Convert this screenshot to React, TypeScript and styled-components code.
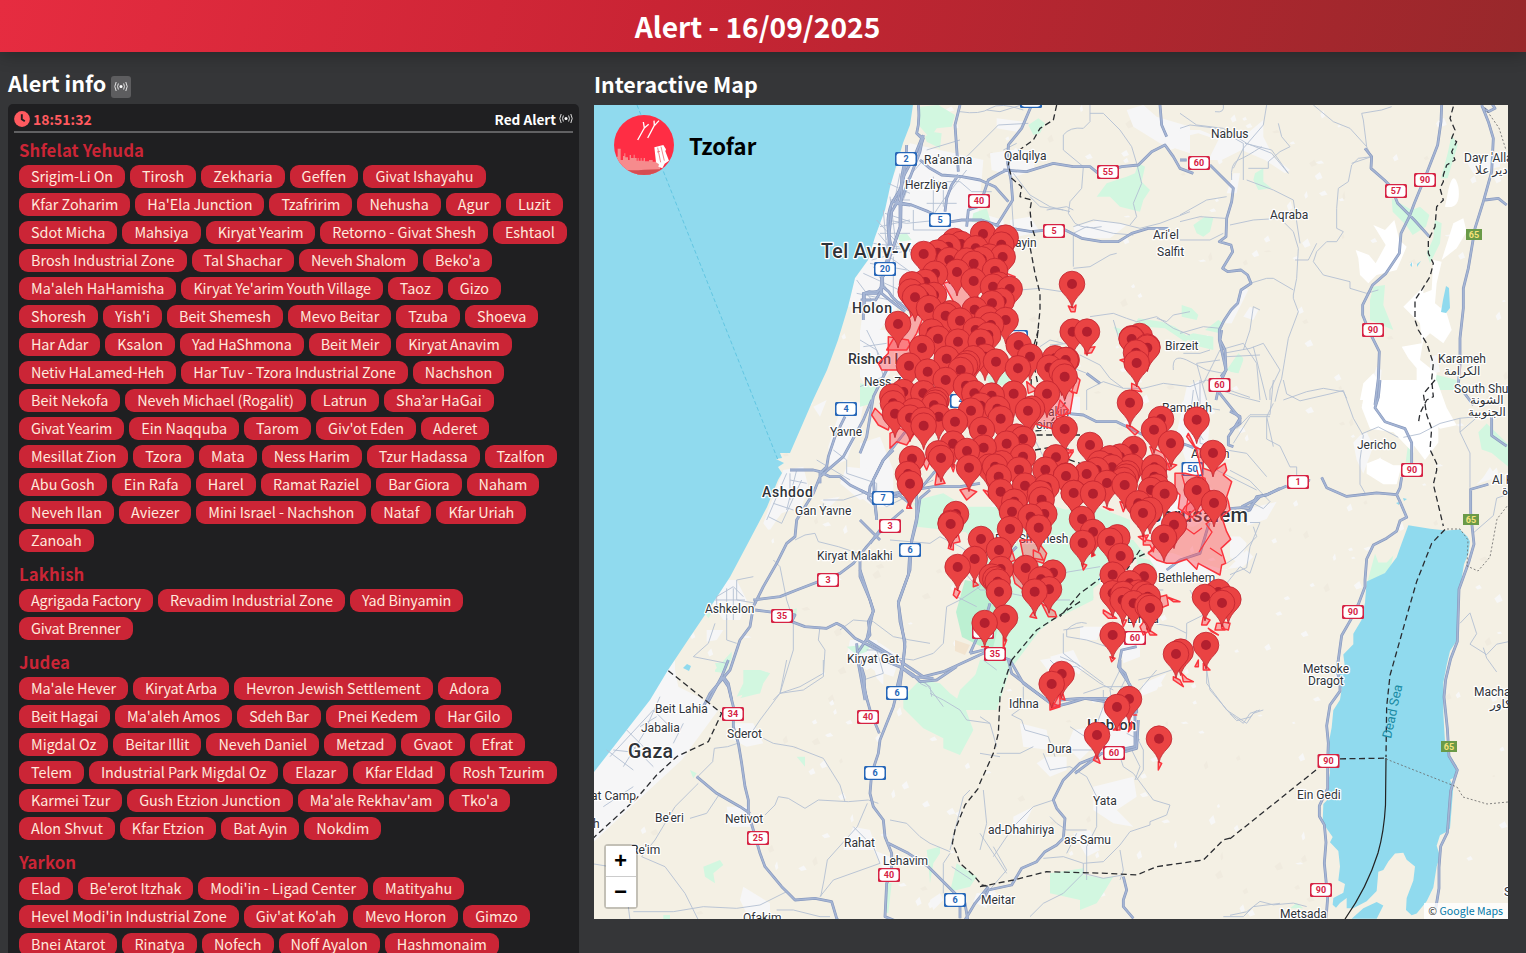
import React from "react";
import styled, { createGlobalStyle } from "styled-components";

const Global = createGlobalStyle`
  * { box-sizing: border-box; }
  body {
    margin: 0;
    height: 953px;
    overflow: hidden;
    background: #353638;
    color: #fff;
    font-family: "Noto Sans CJK JP", "Noto Sans", sans-serif;
  }
`;

const Page = styled.div`
  height: 953px;
  overflow: hidden;
  display: flex;
  flex-direction: column;
`;
const Header = styled.header`
  flex: none;
  height: 52px;
  padding-right: 11px;
  display: flex;
  align-items: center;
  justify-content: center;
  background: linear-gradient(105deg, #e62c40 0%, #c92434 43%, #98282b 100%);
  box-shadow: 0 2px 18px rgba(0, 0, 0, 0.3);
`;
const Title = styled.h1`
  margin: 0;
  font-size: 28.2px;
  line-height: 50px;
  font-weight: 700;
`;
const Main = styled.main`
  flex: 1;
  display: flex;
  gap: 15px;
  padding: 0 18px 0 8px;
  min-height: 0;
`;
const InfoColumn = styled.section`
  width: 571px;
  flex: none;
  display: flex;
  flex-direction: column;
`;
const MapColumn = styled.section`
  width: 914px;
  flex: none;
`;
const Heading = styled.h2<{ $size: number; $height: number; $top: number }>`
  margin: 0;
  height: ${(p) => p.$height}px;
  padding-top: ${(p) => p.$top}px;
  display: flex;
  align-items: flex-start;
  gap: 5px;
  font-size: ${(p) => p.$size}px;
  line-height: 32px;
  font-weight: 700;
`;
const SignalBox = styled.span`
  display: flex;
  align-items: center;
  justify-content: center;
  width: 20px;
  height: 22px;
  margin-top: 9px;
  border-radius: 3px;
  background: #5d5d5f;
`;
const Card = styled.div`
  flex: 1;
  min-height: 0;
  padding: 0 6px;
  border-radius: 5px 5px 0 0;
  background: #1f1f21;
  overflow: hidden;
`;
const CardTop = styled.div`
  display: flex;
  justify-content: space-between;
  height: 29px;
  padding-top: 3px;
  border-bottom: 2px solid #616163;
  font-weight: 700;
  line-height: 22px;
`;
const Time = styled.span`
  display: flex;
  align-items: center;
  gap: 3px;
  font-size: 14px;
  color: #ff5a5f;
`;
const Kind = styled.span`
  display: flex;
  align-items: center;
  gap: 3px;
  font-size: 13.6px;
`;
const Region = styled.section`
  padding: 0 0 0 5px;
`;
const RegionName = styled.h3`
  margin: 0;
  height: 32px;
  padding-top: 5.5px;
  font-size: 16.8px;
  line-height: 22px;
  font-weight: 700;
  letter-spacing: 0.12px;
  color: #cb2536;
`;
const Pills = styled.div`
  display: flex;
  flex-wrap: wrap;
  gap: 5px;
  margin-bottom: 5px;
`;
const Pill = styled.span<{ $tracking: number }>`
  height: 23px;
  padding: 0 12px;
  border-radius: 9px;
  background: #cb2536;
  color: #ffe9dc;
  font-size: 14.4px;
  line-height: 22px;
  letter-spacing: ${(p) => p.$tracking}px;
  white-space: nowrap;
`;
const MapFrame = styled.div`
  position: relative;
  width: 914px;
  height: 814px;
  overflow: hidden;
  background: #f4f0e4;
`;
const Brand = styled.div`
  position: absolute;
  left: 20px;
  top: 10px;
  display: flex;
  gap: 15px;
  color: #000;
  font-size: 22.1px;
  font-weight: 700;
  line-height: 60px;
`;
const Zoom = styled.div`
  position: absolute;
  left: 10px;
  top: 739px;
  width: 34px;
  border: 2px solid rgba(0, 0, 0, 0.2);
  border-radius: 4px;
  background-clip: padding-box;
`;
const ZoomButton = styled.button`
  display: block;
  width: 30px;
  height: 30px;
  padding: 4px 1px 0 0;
  border: 0;
  background: #fff;
  color: #000;
  font: bold 22px/26px "Liberation Mono", monospace;
  & + & { height: 31px; border-top: 1px solid #ccc; }
`;
const Credit = styled.div`
  position: absolute;
  right: 0;
  bottom: 0;
  width: 84px;
  height: 16px;
  padding-right: 5px;
  text-align: right;
  background: rgba(255, 255, 255, 0.8);
  color: #333;
  font-size: 10.6px;
  line-height: 15px;
  white-space: nowrap;
  a { color: #0078a8; }
`;

const regions: [string, string[]][] = [
  ["Shfelat Yehuda", "Srigim-Li On|Tirosh|Zekharia|Geffen|Givat Ishayahu|Kfar Zoharim|Ha'Ela Junction|Tzafririm|Nehusha|Agur|Luzit|Sdot Micha|Mahsiya|Kiryat Yearim|Retorno - Givat Shesh|Eshtaol|Brosh Industrial Zone|Tal Shachar|Neveh Shalom|Beko'a|Ma'aleh HaHamisha|Kiryat Ye'arim Youth Village|Taoz|Gizo|Shoresh|Yish'i|Beit Shemesh|Mevo Beitar|Tzuba|Shoeva|Har Adar|Ksalon|Yad HaShmona|Beit Meir|Kiryat Anavim|Netiv HaLamed-Heh|Har Tuv - Tzora Industrial Zone|Nachshon|Beit Nekofa|Neveh Michael (Rogalit)|Latrun|Sha’ar HaGai|Givat Yearim|Ein Naqquba|Tarom|Giv'ot Eden|Aderet|Mesillat Zion|Tzora|Mata|Ness Harim|Tzur Hadassa|Tzalfon|Abu Gosh|Ein Rafa|Harel|Ramat Raziel|Bar Giora|Naham|Neveh Ilan|Aviezer|Mini Israel - Nachshon|Nataf|Kfar Uriah|Zanoah".split("|")],
  ["Lakhish", "Agrigada Factory|Revadim Industrial Zone|Yad Binyamin|Givat Brenner".split("|")],
  ["Judea", "Ma'ale Hever|Kiryat Arba|Hevron Jewish Settlement|Adora|Beit Hagai|Ma'aleh Amos|Sdeh Bar|Pnei Kedem|Har Gilo|Migdal Oz|Beitar Illit|Neveh Daniel|Metzad|Gvaot|Efrat|Telem|Industrial Park Migdal Oz|Elazar|Kfar Eldad|Rosh Tzurim|Karmei Tzur|Gush Etzion Junction|Ma'ale Rekhav'am|Tko'a|Alon Shvut|Kfar Etzion|Bat Ayin|Nokdim".split("|")],
  ["Yarkon", "Elad|Be'erot Itzhak|Modi'in - Ligad Center|Matityahu|Hevel Modi'in Industrial Zone|Giv'at Ko'ah|Mevo Horon|Gimzo|Bnei Atarot|Rinatya|Nofech|Noff Ayalon|Hashmonaim".split("|")],
];

/* Total pixels by which a name is tightened (positive) or loosened (negative). */
const tighten: Record<string, number> = {
  "Srigim-Li On": 1, Zekharia: -0.7, Geffen: -1, "Ha'Ela Junction": 0.7, Mahsiya: 0.3, "Kiryat Yearim": 3, "Tal Shachar": -0.5, "Neveh Shalom": 2.5,
  "Ma'aleh HaHamisha": 0.5, "Kiryat Ye'arim Youth Village": 5, "Har Adar": 1.5, "Yad HaShmona": 2, "Beit Meir": 0.7, "Kiryat Anavim": 2,
  "Netiv HaLamed-Heh": 2, "Har Tuv - Tzora Industrial Zone": 1, "Neveh Michael (Rogalit)": 1.2, "Givat Yearim": 2, "Ein Naqquba": 0.5,
  Tzora: -0.7, "Ness Harim": 0.5, Mata: -1, "Tzur Hadassa": 0, "Ein Rafa": -1, "Ramat Raziel": 0.7, "Bar Giora": 1, "Mini Israel - Nachshon": 1, "Kfar Uriah": 1.5,
  "Agrigada Factory": 2.8, "Yad Binyamin": 1, "Givat Brenner": 2, "Ma'ale Hever": 1.8, "Kiryat Arba": 2, "Hevron Jewish Settlement": 2,
  "Beit Hagai": 1.5, "Ma'aleh Amos": 0.3, "Sdeh Bar": 1, "Har Gilo": 1, "Beitar Illit": 1, "Industrial Park Migdal Oz": 0.7, "Kfar Eldad": 0.7, "Karmei Tzur": 0.7,
  "Ma'ale Rekhav'am": -0.7, "Alon Shvut": 0.7, "Kfar Etzion": 0, "Bat Ayin": 0.8, "Be'erot Itzhak": 1, "Modi'in - Ligad Center": 0.3,
};

const Signal = () => (
  <svg width="14" height="12" viewBox="0 0 14 12" fill="none" stroke="#f4f4f4" strokeWidth=".9">
    <circle cx="7" cy="5.5" r="1.5" fill="#fff" stroke="none" />
    <path d="M4.4 2.5Q2.7 5.5 4.4 8.5M2.2 1Q-.6 5.5 2.2 10M9.6 2.5Q11.3 5.5 9.6 8.5M11.8 1Q14.6 5.5 11.8 10" />
  </svg>
);
const Clock = () => (
  <svg width="16" height="18" viewBox="0 0 16 18">
    <circle cx="8" cy="9" r="7.9" fill="#ff5a5f" />
    <path d="M7.8 4.3v5l3 2" fill="none" stroke="#1f1f21" strokeWidth="1.9" />
  </svg>
);
const Logo = () => (
  <svg width="60" height="60" viewBox="0 0 180 180">
    <defs><clipPath id="disc"><circle cx="90" cy="90" r="90" /></clipPath></defs>
    <g clipPath="url(#disc)">
      <path fill="#ff2d44" d="M0 0h180v180H0z" />
      <path fill="#f68b8d" d="M0 135h8v-10h3v-24h9v34h7v-12h4v-8h3v12h8v8h5v-15h4v9h8v-10h3v10h6v8h3v-8h3v8h6v-8h3v8h6v-8h4v10h12v-4h11v5h12v-6h10v50H0z" />
      <path fill="#d64d52" d="M0 161q45 8 90 3l90-3v22H0z" />
      <path fill="#fff" d="M121 97l27-7 8 13-2 6 11 28-13 9-7 14-12-5 2-7-9-6Z" />
      <path stroke="#f0707a" strokeWidth="2.5" d="M131 98l9 44m1-47l10 42m-22-26l9-2" />
      <path fill="none" stroke="#fff" strokeWidth="4" d="M71 75l20-36-3-18m3 18l13-11M101 69l20-38-1-14m2 14l13-14" />
    </g>
  </svg>
);

/* Survey sheets: each holds its own origin; one unit is a third of a map pixel
   unless the sheet states another vertical scale. */
type Sheet = {
  at: [number, number];
  sy?: number;
  city?: string[];
  park?: string[];
  sand?: string[];
  minor?: string[];
  major?: string[];
  border?: string[];
  zones?: string[];
  pins?: number[][];
};
const sheets: Sheet[] = [
  {
    at: [590, 60],
    city: ["M960 250L930 300 900 370 890 450 862 530 835 600 795 655 775 740 1040 740 1150 650 1180 300Z"],
    minor: ["M895 370l65 30M885 460l75 25M850 550l110 15M870 570l90 65M820 640l130 60M800 700l150 30M860 480l90 100M930 340l-40 200M800 660l60 80", "M870 500l90-20M845 600l110-30M900 410l20 160M865 520l50 60"],
    major: ["M950 255Q948 330 935 380L905 430Q890 470 895 510T905 560L890 610M945 300L935 350 932 500 910 560M915 430L960 435M878 650v30l18 15q15 30 70 60M878 680q-10 20-40 15l-15 5v50"],
  },
  {
    at: [860, 100],
    city: ["M170 150L290 160 300 220 350 250 330 330 430 360 440 420 250 440 130 600 20 740 0 700 30 450 80 300Z", "M390 160l65-10 60 0 10 60-60 20-70-20ZM410 55l80 10-20 30-60-10ZM800 30l50-15 40 35 100 30v80l-90-30-80-50Z", "M450 360l60-10 30 45-90 20ZM640 380l80-20 80 15-50 40-100 0ZM190 330l70-20 40 50-80 30Z"],
    park: ["M180 20l55-5 50 30-10 35-45 5-20 30-30-35ZM195 110l20-15 30 5-5 45-40-20ZM505 75l30-20 20 15-15 30-20 5ZM710 290l30-40 60-20 25-10 10-30 20 10-10 45 25 25-20 30-10 35-60-15-30-30ZM340 340l40-15 15 50-60-10ZM760 680l20 35 30-25 25-35 70 10 40 15 45 35-15 10-60-40-60-5-30 20ZM110 405l30-5 15 20-35 5Z"],
    minor: ["M300 35q60 10 90-10t100 5M380 30L420 35 500 10M310 180L415 75l90-5M610 105q20-25 60-20l20-20V15M610 105v45l60 50-5 65-35 40-5 35 20 30q30 20 80 10M690 40l40 0 50 50 35 50 15 50 15 60-25 60 10 40-20 25M640 380l60-20 80 10 60 15 60-15 90-35M640 500l0-100 40-20 80 20 60 5M640 505l50-5 60-35 20-5", "M460 220l50 65 60 35 60 15M510 290l30 30 70 10M455 300l5 80M430 150l40-20M320 210l-70 90-40 60M200 150l100-30M480 570l60-5 100 15M690 650l70-10 40 15 30 10 60-15 50 35 50 20M680 700l-50 30-60 5", "M760 660l15 50 40 45M990 635l-50 10-20 20-30-10M560 330l60-10 20 10", "M130 300l20-55h150l35 30h60M130 250l60-70 110-10M160 330v60h120M200 310h90M220 230v140M250 250v70M170 430h150M80 360l60 10 100-10M60 400l90 0M50 440l110 10M30 490l110 20M40 500l60 100M70 330l10 120M90 300l60 0M100 470v120M140 440l40 60"],
    major: ["M175 15q5 50-5 85l15 15-20 50-35 65-20 80-15 25-8 70 0 60-20 50-5 60-15 25-45 0M190 105l-10 50-60 155 0 70-20 60-30 90M170 100l20 15-15 45M180 180l30 25 35 20 60 5 55 10 45 20 40 45M300 15l-15 60 10 140M295 225l-20 30-15 40-5 40M515 15l-30 70-40 50-2 55 10 50 5 60-50 80M440 210l-20 10-35 20-20 60-10 20-30 10-5 50M100 305l55 10 50 20 70 30 30-5 60 0 60 20 90 15 90-10 60 30 60 10 50 0 40-25 50-15 60 0", "M430 210l70 5 80-25 60 10 50 0 25 20 70-20 50-5 40-40 40-20 25 35 20 35 40 15M900 15l5 60 15 35M65 530l0 50 30 25 40 30M65 560l-15 20-40 0v80"],
    border: ["M590 15l-10 45-40 25-20 35-70 50-5 25 10 40 30 25-5 30 35 10-5 30 5 50 10 30-15 30 15 80 15 60 0 50-5 50-5 50-15 80-2 50"],
    zones: ["M250 550l70-20 50 90-70 20ZM440 520l25 10-25 20ZM110 700l50-60 30 10-20 50-30 50H80ZM625 618l15 5 8-8-3 20-12 0ZM675 745l30-5-10 18-20 3Z"],
    pins: [[369,402],[437,413],[284,423],[303,432],[424,434],[265,440],[347,445],[191,462],[232,458],[428,471],[268,480],[388,470],[365,478],[320,482],[341,491],[405,513],[291,516],[225,521],[341,543],[196,546],[156,553],[399,560],[449,567],[416,554],[152,575],[193,589],[165,592],[222,585],[396,610],[425,603],[207,624],[344,629],[270,640],[257,647],[381,655],[300,662],[437,660],[393,675],[114,672],[215,695],[347,690],[385,705],[636,552],[638,695],[681,695],[839,708],[815,717],[862,740]],
  },
  {
    at: [1180, 100],
    city: ["M0 90l60 0 50 20 80 0 60-50 0 50 30 60 50 40-15 10-60-40-70-30-60 30-40 0 30-60-60-20-65 15ZM140 280l20-60 20 0-10 60ZM190 560l15 10-30 60-20 40-20 0ZM190 650l20-30 25 10-15 30ZM580 830l10-30 15 10-5 50ZM750 770l20-5 10 50-30 10ZM850 850l20 5 10 30-20-5ZM850 170l110 0 0 30-80 20Z"],
    sand: ["M580 375l35 15 28-30 15 60 22 20-30 70-60 15-25 25-25-25-5-50-8-25 40 15 20 25 30-55ZM805 270q15-65 30-10 10 70-40 60ZM820 370l30-15 10 40-30 50-45 35ZM760 480l25 5-15 65-5 60 35 30 15 50-25 40-40-30-20 20-10 60 50 40-10 80-50-5 0-90-25-30-20-35 60-10-5-60-50-50 60-60 0 20 25-10ZM550 850l30-30 30 40-10 40-60 0Z"],
    park: ["M40 375l35-25 25 5-10 40-20 15-20-10ZM225 220l25-15 0 40 25 20-40 5-15-30ZM635 295l60 35 25-10 28 25-10 35-40 25-20-30-40-40ZM815 105l18 30-30 100-20 0 20-75ZM765 360l20 10-5 60-30 60-10-30 20-45ZM580 560l35-5-5 60 30 75-70-30 0-60ZM150 815l30-50 10 15-15 40ZM5 615l30 10 20 20-5 15-45-10ZM75 690l40-30 15 10-10 30ZM750 820l80 20 0 30-50 0Z"],
    minor: ["M0 40l50 35 80 10 70 45 75 30 50 60M260 15l-10 60-60 70-30 60M130 15q5 25-25 20M0 85l30-10 80 10 80 45v110M195 130l80 20 50 70M295 70l10 40 25 30-30 15-35 30 0 20-60 0M155 240q-5-50 20-60t70-40M0 365l60-15 75 5M150 375l70-15 80-5 40 40 15 50-5 90-10 50 0 10 15 40-30 80-10 60-10 60-10 30-10 40M140 290l-60 10-80 45M200 240l80 30 60 30 20 130M0 420l90 0 40-20M210 550l50-15 20 0 60 35", "M400 15l60 50 50 20 50 55 15 30-40 5-20 20-10 50-30 20-5 60 0 60 20 10-20 30-30 0-30 30-10 30 30 40 80 20 0 20 50 15 35-10M410 430l-25 50-40 0M575 170l-60 20M560 140l-10-80-5-20 60-10 30-10M190 750l20-60 10-70 20 10M130 760l80-15 40-15 50 80-30 60 0 30M0 700l70-20 50 5M140 770l100-5M10 760l50 0 30-10M120 780l-70 10 30 110M220 740l40 160M310 900l70-25 50-10 60 10 10 20"],
    major: ["M0 180l20 0M90 195l30 30 40 40-5 40-15 50-2 55-20 15 35 10 5 20-15 25-15 25 15 10 40-5 20 15 10 25-30 20-10 40-20 20-20 30-15 30 0 30 20 90-20 45-10 45M555 145l20 25-2 35 40 35 20 20 20 50 50 50 45 50M785 15l-2 50-10 70-35 90-35 85-15 40-25 50-5 60-40 60-40 35-30 60 0 30 20 50 30 60-3 80-10 80M905 15l20 50 15 50-5 100-25 90-25 80-20 120-15 60 0 60-10 90 0 80-5 60 15 20 30 40M915 300l40-5 25 20M905 20l20 15 20-10-10-15"],
    border: ["M820 20l-10 35 15 35-10 25 15 10-15 30 10 25-25 15-10 30 0 20-10 20 10 35-20 20-5 60-20 40 0 40 15 30-10 40-25 40-20 30 0 60 10 30 25 40 10 30 10 30-5 50 5 50-20 10-20 40-5 30"],
  },
  {
    at: [1060, 330],
    city: ["M380 170l40-20 30 110-10 130-60 10-30-90ZM330 500l120-30 50 60-100 60-110-10Z"],
    park: ["M500 120l35-50 15 15-15 45ZM370 20l30-10 60 10 0 40-40-10ZM0 540l110-10 100 40 0 60-230 0Z"],
    minor: ["M60 75l60 30 30 40 40 30 60 0 60-15 80 10 50-20 70 30M80 240v-60l50-25 60 20M340 120q-5-50 40-30l60 30 50 10M480 180l60 20 60 15M430 160l50-100 70-20 40 60 10 110M400 180l-10 90 40 60M420 150l0 190 80 20M440 390l30 30 60 30 60 30M640 220l-20 40 20 90M500 360l60 10 60 70M350 360q30-30 80 0M30 110l50 20M520 340l50-80 60 0M400 150l20 80 60 10"],
    major: ["M20 250l50 5 40 20 60 0 40 20 60 30M300 320l80 25 50 20M485 0l-5 30 15 30 3 60-15 20M475 185l40 50 25 30-15 25-20 30 0 25 15 5M660 475l-40 20-30 5-20 40-60 10-40 0M80 130l40 30"],
    border: ["M20 160l-5 60-60 80-120 10M210 380l-130 10-40 50M0 380l60 20 20 30"],
    zones: ["M345 430l30 0 60 15 10 60-60 50-30-20 5-40-15-15Z", "M0 210l25 30-15 20-20-10ZM0 380l40-15-20 30-20-5ZM200 285l15 5 20 15-10 10-25-25ZM215 160l20 10 10 15-30-5ZM180 90l20-5 10 20ZM50 140l10 10-10 40-15-5ZM325 400l25 5-20 15ZM270 350l40 20 20 50-40-10ZM180 515l20 5-10 25Z"],
    pins: [[215,25],[262,53],[228,68],[230,99],[20,90],[210,218],[303,267],[282,299],[410,269],[333,340],[459,369],[90,345],[221,357],[180,380],[150,385],[120,400],[156,412],[215,410],[110,420],[80,432],[18,438],[202,430],[198,440],[190,450],[283,412],[283,440],[141,459],[194,465],[273,480],[290,470],[314,491],[42,489],[99,491],[235,520],[410,480],[462,519],[249,549],[270,540]],
  },
  {
    at: [860, 330],
    city: ["M0 0l80 0 10 130-60 60-30-50ZM0 340l60-20 40 100 0 110-60 0-40-30ZM570 200l90 0 0 60-90 0Z"],
    park: ["M0 160l50 10-10 50-40 10ZM170 510l80-20 100 60 0 60-180-20ZM380 140l70-20 20 40-80 10Z"],
    minor: ["M0 30l50 30 20 80-70 30M20 0l40 80M0 90l70 0M10 50l70-10M0 480l80 50 60-30M540 50l30-20 40 10M520 320l30 60 60 30M180 470l40-20"],
    major: ["M80 120l-40 80-20 120-20 50M140 300l-70 90-30 60 10 120M0 480l60 30 50-20 40 30M280 370l-60 60-50 60 0 80M100 490l120-20 80 0 60-10"],
    border: ["M535 0l-20 70 20 100M530 315l130 0M525 360l60-10 50 10M530 180l70-10"],
    zones: ["M85 20l60 10 20 60-40 30-60 0-10-20 30-30ZM45 235l-10 20 20 30 30 15 5-20-30-30ZM90 310l30-15 40 20-20 30-30-10-20 20ZM200 380l-10 20 10 20 10-25ZM230 430l15 10 10 20-30 5ZM300 480l20-5 30 10-30 25ZM145 520l10 15-15 0ZM500 155l30 25-25 10ZM600 160l40 30-10 60-40 10 0 40-70-20 30-100ZM640 360l-20 10-10-10ZM270 400l15 5-5 20ZM370 480l30 10-10 15Z"],
    pins: [[476,45],[510,80],[474,115],[408,95],[375,80],[260,86],[186,54],[234,26],[294,35],[362,35],[147,107],[203,125],[340,85],[322,100],[315,108],[302,120],[257,150],[318,167],[585,85],[617,90],[568,113],[614,140],[605,125],[130,186],[190,190],[97,200],[99,220],[105,251],[461,191],[561,191],[395,197],[343,190],[230,210],[226,218],[222,226],[362,227],[333,242],[412,236],[160,243],[150,263],[190,270],[191,287],[236,260],[285,275],[422,266],[516,236],[504,242],[614,297],[366,299],[489,327],[470,320],[279,341],[440,341],[321,363],[371,353],[235,370],[243,384],[489,380],[588,382],[156,386],[144,432],[150,461],[327,413],[388,410],[425,400],[405,410],[416,440],[477,419],[556,419],[618,437],[495,467],[560,470],[422,485],[540,490],[545,509],[641,489],[463,515],[456,545],[512,560],[553,552],[288,552],[272,582]],
  },
  {
    at: [860, 510],
    city: ["M0 400l60 0 60 40-20 60-60-20-40-40ZM480 50l60-20 60 60-40 50-80 0ZM570 440l70-20 30 60-60 20Z"],
    park: ["M190 20l50-30 350 0 110 40 0 240-120 60-40 30-90 120-30 90-10 30-130 0 20-60 40-40 60-60-20-30-60-60 50-160-10-90-40-30-30-40Z"],
    minor: ["M90 90l120 10 30-20 60 30 60 40 0 80-60 40-40 20-10 110-30 30-60 20-80-10-90-50M280 150l80 90 60 0M370 450l40 30M450 250l100 20 80 0M350 290l-60-30M610 360l60-10M610 370v60l50 40M540 190l80-10M180 520l20 10M190 510l60 80"],
    major: ["M175 0l-20 90-5 90-35 100 20 130-20 160M0 30l60 60M30 100L60 60 130 0M0 180l40 120-20 90 80 50 60 40 30 20 60-15 130-60M390 280l-15 50-45 100M330 430l40-10 80 30 40 70 70 50M0 450l20 120M450 130l20-20"],
    border: ["M660 275l-60 40-70 45-75 90"],
    zones: ["M270 90l25-15 5 20-20 5 0 20-15-5ZM340 210l15 15-15 5ZM285 235l15 10-10 20-10-10ZM455 120l10 30-20 10ZM480 90l50 0 30 40-10 30-60-20ZM520 120l20 10 10 20-30-5ZM455 180l60-10 30 60-30 30-50-40ZM520 305l10 20-20-5ZM545 280l40 25 5 15-25 0ZM430 380l10 10-10 25ZM365 410l20 0ZM600 550l0 35-25 10Z"],
    pins: [[272,39],[363,87],[417,120],[450,57],[344,147],[293,171],[422,177],[395,200],[406,208],[413,215],[417,245],[497,174],[579,188],[543,208],[567,238],[524,245],[536,53],[435,323],[374,339],[605,492],[575,522]],
  },
  {
    at: [1060, 500],
    city: ["M270 160l70 0 80 30 80 20 60-60 20 20-30 30-70 10-40 30-170-10ZM60 380l70 0-20 40-50 0ZM130 600l90-20 20 150-60 20-50-60ZM180 430l60-20 0 60-50 20ZM40 690l60-10 20 40-60 60-40-40Z"],
    park: ["M0 130l120-10 100 0 40 50-80 0-60 80-120 90ZM230 170l40 10 20 30-60 0Z"],
    minor: ["M500 190l30-20 60-60-10-30M450 240l50 10 40-50 30 20 20-60M390 270l30 60M380 400v-30l60-30-10-60M280 370l60 10 40 20-5 60-40 50-60 20-40 10M440 490v60l60 80 30 20 30 20 20-30 30-10M80 370q-30-10-60 20l0 20 60 10 60 20M0 470l50 20 80 60M70 580l60-20 80 0M100 700l30-80 0-50M10 750l120 0M210 740l30 60-15 40M180 570l20-40M30 680l90 60M0 220l120-20M130 230l90 40 90 0M200 700l40 20"],
    major: ["M230 440l-45 10-10 50 20 20 30 80 0 140-100 20-80 60M0 600l60-5 80 0 70 30M585 0l-40 20M320 210l40-30 60-20 30-100"],
    border: ["M280 150l-110 50-110 80-60 70M240 150l-40 60"],
    zones: ["M265 160L300 120 350 60 375 20 400 0 430-60 410-150 380-190 385-200 405-160 425-150 430-120 430-95 460-85 495-110 500-90 490-75 515-55 500-10 505 5 510 30 485 50 500 95 512 118 483 145 497 190 485 195 480 225 415 190 410 208 380 178 345 190 320 190 290 180Z", "M130 330l25 15 15 10-25 0-15-15ZM235 110l30-5-10 20ZM250 100l10 20 25 5-5 30-10-20-20 0ZM65 190l15 5-10 15ZM95 155l10 10-10 5ZM130 20l30 10-10 0ZM185 360l15 0-10 20ZM240 380l15-20 15 30-20 15ZM260 385l30 20-20 0ZM300 290l20-5 5 30-25 10ZM320 290l40 15-20 0ZM430 350l20 10-10 15-15 0ZM445 385l30 20-20-10ZM470 370l15 0 10 20-30 0ZM485 365l25 5-5 20-20-5ZM150 470l15 5-10 10ZM415 480l-10 20 10 0ZM430 490l20 20-20 0ZM340 530l20 10 10 20-30-20ZM365 520l15 15 20 10-30 0ZM5 570l10 30-15-5ZM180 670l-20 20 20 0ZM215 665l-10 30 10-10ZM220 645l10 0ZM110 760l10 30-20-10ZM295 785l10 5-10 20Z"],
    pins: [[66,57],[99,96],[68,129],[172,112],[150,122],[182,168],[158,224],[252,229],[209,250],[158,280],[190,282],[235,278],[250,282],[263,290],[188,300],[221,310],[262,318],[270,324],[312,113],[342,74],[475,276],[435,291],[505,298],[486,309],[158,405],[438,435],[362,455],[348,462],[207,597],[171,621],[111,705],[297,716]],
  },
  {
    at: [590, 400],
    city: ["M760 0l60 10-10 60-40 110-50 20-5-60ZM580 210l60-10 15 60-20 60-60 20-40 50-15-20ZM400 540l40 0 30 60-20 60-50 0-40-60ZM690 300l60-10-30 30ZM350 690l50 0-20 30-30 5ZM780 720l80 0 30 60-60 30-60-40ZM670 20l40-20-20 50ZM520 370l40-10-20 30ZM770 200l90 10 10 70-60 20-60-50Z"],
    park: ["M770 740l50-5 30-10-20 30-30 10ZM375 810l50-55 0 20-20 45-30-5ZM455 890l10-30 0-50 30 10 10-10 35 10-20 30-10 30-60 15ZM970 310l50-10 0 70-30-20ZM605 630l15-5 0 15-15 10ZM345 640l20 0-10 15Z"],
    minor: ["M590 220l-60 140M600 240l50 10M570 270l50 15M550 310l60 20M535 350l40 20 60-130M600 220v80M620 210l-30 120M700 300l60 0 60-20M700 310v20M730 150l40 30 0 40 90 30 0 50M680 180l100 60M615 420l30-15 30-5 10 25 60 15 60 20M550 480l20 20 20 100 20 60 0 90-40 130M690 680l-5 40 20 30-5 80-60 40-70 10-20 20M490 530l-50 10 0 60 60 10M375 670l-20 60-45 40 100 20M380 640v-50l50-30 30 30M410 565v95M430 565v95M375 600h90M380 630h90M410 655l0 65 30 10M750 690l40-30 60 5 60 45 50 10 60 10M830 750l30 0 20 70-60 20"],
    major: ["M845 0l-25 60-60 110-70 60-20 50-50 80-5 50-25 20-30 60-40 70-30 60-10 60-30 40-30 90-60 70-30 60M765 50l-30 60-20 60-5 30-20 20 0 30M600 210l70 0 20 5 30 15 30 0 30 25 60 30M910 150l-30 30-40 80-5 35 20 20 5 40M980 180l-20 80-40 30-60 0-25-10M875 390l-45 50-40 50-40 30-130 50-50 20-80 10M1020 270l-30 25-10 70-20 80-5 80-30 80 5 60 15 60-5 60-20 80M810 470l0 60 30 70 10 35-15 30 5 40-15 20-20 30M495 630l120 15-10 20 40 15 65 5 30-15 20 10 35 35 60 30 60 30M800 730l5 60 20 110M400 830l15 20 10 50M930 800l40 30 60 5"],
  },
  {
    at: [590, 660],
    city: ["M255 0l-260 340 0 220 150-140 130-120 110-150-60-40-60-30-10-50ZM430 190l60 0 30 60-50 10-40-20ZM410 440l60 0 20 60-70 0ZM460 680l80 50 0 30-60 20-30-60ZM790 500l50 10 20 60-100 0ZM850 570l50 20 0 40-20 0ZM850 15l30 0 0 60-20-20ZM1160 700l30-5 0 50-40-20ZM1020 720l30-20 10 20-30 30Z"],
    park: ["M375 10l30-5-20 30ZM440 110l20-40 0-40 50 0 30 10-20 20-10 40-40 0ZM940 110l50-50 60 10 30 30 40 30 30 80-40 75-50-20 0-30-60-30-60-60ZM340 620l50-20 10 15-30 25 5 30-30-20ZM1010 570l40-10 0 20-20 30-10 60-5-60ZM1100 610l60 40-20 30-60 15ZM885 665l20 5-10 90-10-5ZM300 330l20 10-10 15ZM620 290l25 0 0 30ZM220 765h20v12h-20Z"],
    minor: ["M590 0l-20 100-60 80-20 30M570 100l60-20 70-40 0-40M520 235l30 15 60 10 90 35 50 80 15 50M525 465l30-30 10-25 30 5 50 30 40-25 90 5 60-5 30 10M443 250l-30 10-40 5-5 40-50 50M325 370l-70 70-60 100-40 50 70 30 60 80 40 80M390 400l-40 60-50 15M832 430l-30 70-90 100-10 60-10 50M690 710l40-50 140-50-20-50-60-60M900 480l50 10 40 40 30 20 60 25M1080 580l-20 30v90M1085 620l60 40M130 755l120 0 90-15 100 5 70-10 80-40M0 610l120 20M560 750l50 0 80 20 30 0M1020 100l40 20 50 30 20 30 70 10M120 780l-10-80M990 60l30 20 5 30M1080 570l40-160 20-20", "M60 290l130-140M70 270l90 10M100 320l80-130M130 260l60 60M110 210l60 60M50 270l80 60M150 200l50-30M190 150l60 60M170 200l40-90M40 440l90-60M250 250l30-60"],
    major: ["M415 0l-20 50-40 75M395 50l20 30 15 60 0 60 15 50 10 60 10 70 10 40 0 40 15 50 20 70 15 40 50 60 20 20 20 20 60-5 50 10 15 50 10 15M320 350l60 50 70 40 30 20M808 0l15 50 0 40 20 70 25 60M940 0l-10 60-20 80-40 100-5 40-20 60-5 60 10 40 30 40 5 50 20 50 0 60-15 30-5 100 50 20M895 550l60 30 60 40 60 60 50 50 10 60M880 0l60 25 30 20 20 20 50-5 60-40M1195 680l-40 50-30 50M1110 725l0 50"],
    border: ["M235 32L395 160 355 245 260 290 200 345 140 415 0 543", "M1165 385L1125 435 1095 510 1087 550 1100 580 1110 610 1150 645 1175 675 1200 680"],
  },
  {
    at: [980, 660],
    city: ["M0 700l30-20 20 20-20 30ZM180 0l60-10 20 40-50 10ZM360 150l100-50 10 90-60 100-60-20ZM340 380l120-30 10 60-60 40 50 50-60-10-60-40ZM100 470l60-30-20 40-10 50-30-10ZM200 290l60 0 0 40-50 20-40-40ZM280 520l50-10 30 60-40 20ZM490 70l70-30-30 50-50 20ZM120 190l80 20 10 60-80-10Z"],
    park: ["M0 0l90 10-20 20-40 50-30 70-40-20ZM210 640l100-15 0 20 60 10 30-5-30 50-20 30-50 20 0-30-90-20Z"],
    minor: ["M130 80l0 60-35 25 30 15 10 30 70 20 20 60M0 170l30 20 20 70M50 280l70 0 40-20M190 280l20 50 60-10 50 30 30 60 0 90-30 60 0 100M60 290l-60-10M210 0l20 20 60 0 70 50 40 20M320 510l-60 0-30-20-20-20M220 420l-60 20-60 60-60 90M40 560l40 70-60 70M190 595l60-5 60 20 60-5 50-50 30-40 60-20 0-10 50-20 10-30-50-15-60-80-30-20-10-30-20-30M470 230l20 40 0 60-20 30M420 570l10 60-10 30M310 610l0 30-60 60-60 30-40 40M310 640l60 15 60-10M470 100l60-70M680 30l10 60 60 70 40 30 20-30 30-10M730 770l60 0 30-30 80-10M410 180l50 20M290 520l-30 60M10 390l10 100-20 80M0 520l80 120M420 30l-30 60 10 60"],
    major: ["M85 0l10 40 90 70 40 30 40-10 50-15 60 10M420 0l0 30 40 60M475 180l-5 85-35 10M350 290l-50 20-50 50-30 60 10 25 25 30-5 60-20 20-35 20-25 30-45 20-30 50-70 15-15 30M430 650l10 40-10 30 0 20 30 35M470 100l0 60"],
    border: ["M95 0l-20 60-15 50-5 110-15 60-45 100", "M0 680l100-20 100-25 180 5 90 5 60-25 140-20 60-60 22-6"],
    zones: ["M210 130l10 0 20 10-30 10Z"],
  },
  {
    at: [1230, 380],
    sy: 0.34758,
    city: ["M370 180l20-20 20-10 20 40-30 80-20-40ZM370 160l30-10ZM0 450l30 0 20 20-20 60-30-20ZM60 370l80-20-30 50-60 20ZM760 280l20-30 20 30-60 20Z"],
    sand: ["M410 0h150l0 80-10 130-60-60-70-10-25-60ZM560 0l50 60 15 40 0 80-40 50-40-50ZM620 0l30 80 30 50-50 10-60-60ZM410 240l40-15 40 20 25 0-15 55-40 0-50-30Z"],
    park: ["M435 500l10 25 25 0 20-20-10 40-70 45ZM535 180l15 0-10 70-15 0ZM745 150l25-25 65 60 0 65-50-40-30-10ZM585 10l20-10h60l10 25ZM180 1520l20-15 20 15Z"],
    minor: ["M160 0l10 40 40 20 90-20 40-10 30 80 30 50-10 70 0 70 15 25M395 155l50-20 60 30M520 165l50-10 60-30 60-15 60-5M690 110l0 40 30 60 0 100M690 150l60-50M0 30l60 20M130 0l-10 100-60 0-40 40M110 110l0 60 40 20 30 60 20 0 0 30M0 260l60 30 60 60-20 20-40-20M0 560l50-20 10-60 30-70-30 0M730 440l60-50 10-50 30-10M690 700l30-30 20 60-20 30 50 30 30-30 50-10M760 770l10 30 30 40M0 960l20 20 40-10 20-20M0 1540l50-10 40-30 40 10 60-5 40 10"],
    major: ["M450 0l-5 50-10 30 30 40 60 20 20 40 0 80M515 280l-5 30-10 20-60-5-90 10-60-25-15-30M240 290l-30-10M170 305l-60 25-20 5-30 30-60 5M500 330l10 20 20 45-20 10-10 30-30 20-40 20-20 40-5 60 0 20-20 50-20 40-30 50-10 70-5 30 10 30 0 30-30 40-10 60 5 50-2 50 0 80-10 20-15 30 0 30 15 25 5 50-5 60 10 100-5 60M722 312l0 70 10 90-15 50-30 80-5 150-20 50-15 60-5 50 10 90 5 80 25 40-20 60-5 60-5 60-20 40-5 60 0 60-10 60M720 315l55-15M785 100v60l45 30M0 90l30 15 0 20-30 20"],
    border: ["M615 0l-35 40 10 60 15 40-5 60 20 40 0 20-10 40 10 40 10 40 10 40", "M645 430l-40 40-45 110-30 100-50 170-10 90-2 145M330 1090l138-2M258 1122L0 1320"],
  },
];

const sea =
  "M535 418L600 428 648 433 690 430 712 450 720 465 715 500 702 530 690 600 683 680 680 750 660 780 650 820 640 870 640 960 645 1040 660 1080 680 1110 680 1140 660 1150 670 1170 665 1230 660 1290 650 1300 630 1310 620 1340 630 1370 620 1400 610 1460 590 1500 560 1535 545 1540 528 1525 530 1490 550 1440 555 1400 530 1380 520 1360 495 1362 475 1385 460 1410 445 1415 440 1470 410 1500 370 1520 350 1520 350 1490 330 1505 318 1518 308 1510 310 1490 340 1475 345 1450 325 1440 330 1400 325 1355 300 1330 308 1315 290 1290 278 1270 280 1220 300 1200 290 1180 300 1130 295 1050 305 1000 310 950 330 920 335 890 325 850 345 830 340 790 370 760 370 730 395 690 405 640 410 580 465 555 500 510 515 470ZM365 1550L400 1520 440 1502 460 1512 440 1550Z";

const roadSigns: [number, number, string, "b" | "r" | "g"][] = [
  [906,159,"2","b"],[1031,101,"6","b"],[940,220,"5","b"],[885,269,"20","b"],[979,201,"40","r"],[1108,172,"55","r"],[1054,231,"5","r"],[1199,163,"60","r"],[1396,191,"57","r"],[1425,180,"90","r"],[1474,234.500,"65","g"],[1373,330,"90","r"],[1219.500,385,"60","r"],[846,409,"4","b"],[961,401,"4","b"],[1017,337,"5","b"],[883,498,"7","b"],[890,526,"3","r"],[910,550,"6","b"],[828,580,"3","r"],[782,616,"35","r"],[1192.500,469,"50","b"],[1298,482,"1","r"],[1412,470,"90","r"],[1471,519.500,"65","g"],[1353,612,"90","r"],[983,632,"38","r"],[995,654,"35","r"],[1135,638,"60","r"],[897,693,"6","b"],[733,714,"34","r"],[868,717,"40","r"],[1114,753,"60","r"],[1449,746.500,"65","g"],[1328.500,761,"90","r"],[875,773,"6","b"],[758,838,"25","r"],[889,875,"40","r"],[955,900,"6","b"],[1321,890,"90","r"],
];

/* x, baseline, text, size, weight, width */
type Place = [number, number, string, number?, number?, number?];
const places: Place[] = [
  [1004,160,"Qalqilya"],[1211,138,"Nablus"],
  [924,164,"Ra'anana"],[905,189,"Herzliya"],[1015,247,"ayin"],[1153,239,"Ari'el"],[1157,256,"Salfit"],[1270,219,"Aqraba"],[1464,162,"Dayr 'Alla"],[1475,174,"دير علا"],[821,258.5,"Tel Aviv-Y",19.5,500,90],[852,313.5,"Holon",14,500,40],[848,364.5,"Rishon L",14,500],[864,386.5,"Ness Z"],[1165,350,"Birzeit"],[1438,363,"Karameh"],[1444,375,"الكرامة"],[1454,393,"South Shu"],[1470,404,"الشونة"],[1468,416,"الجنوبية"],[1162,412,"Ramallah"],[830,436,"Yavne"],[1357,449,"Jericho"],[1492,484,"Al K"],[1502,495,"ة"],[762,497.5,"Ashdod",14,500,51],[795,515,"Gan Yavne"],[817,560,"Kiryat Malakhi"],[705,613,"Ashkelon"],[847,663,"Kiryat Gat"],[1158,582,"Bethlehem"],[1151,522.5,"Jerusalem",20,500,97],[655,713,"Beit Lahia"],[641,732,"Jabalia"],[628,758.5,"Gaza",19.5,500,45],[727,738,"Sderot"],[591,800,"at Camp"],[593,828,"h"],[655,822,"Be'eri"],[725,823,"Netivot"],[631,854,"Re'im"],[844,847,"Rahat"],[883,865,"Lehavim"],[743,922,"Ofakim"],[1009,708,"Idhna"],[1087,730,"Hebron",15,500,49],[1047,753,"Dura"],[1093,805,"Yata"],[988,834,"ad-Dhahiriya"],[1064,844,"as-Samu"],[981,904,"Meitar"],[1303,673,"Metsoke"],[1308,685,"Dragot"],[1297,799,"Ein Gedi"],[1280,918,"Metsada"],[1474,696,"Macha"],[1490,708,"كاور"],[1504,896,"S"],[1048,416,"al'in"],[1036,429,"oim"],[1065,429,"ut"],[1191,458,"Al-Ram"],[995,543.5,"Beit Shemesh"],[1127,623,"Efrata"],[1100,582,"Be"],
];

const Label = styled.text`
  font-family: Roboto, "DejaVu Sans", sans-serif;
  fill: #2f3338;
  stroke: #fff;
  stroke-width: 2.4px;
  stroke-linejoin: round;
  paint-order: stroke;
`;
const SeaLabel = styled.text`
  font-family: Roboto, sans-serif;
  font-size: 13px;
  fill: #1a8aa3;
`;
const SignText = styled.text`
  font: 700 9px Roboto, sans-serif;
  text-anchor: middle;
`;

type LayerKey = "city" | "park" | "sand" | "minor" | "major" | "border" | "zones";
const Layer = ({ name, ...rest }: { name: LayerKey } & React.SVGProps<SVGPathElement>) => (
  <>
    {sheets.map((s, i) =>
      s[name] ? (
        <g key={i} transform={`translate(${s.at[0]} ${s.at[1]}) scale(.33333 ${s.sy ?? 0.33333})`}>
          {s[name]!.map((d, j) => <path key={j} d={d} vectorEffect="non-scaling-stroke" strokeLinejoin="round" {...rest} />)}
        </g>
      ) : null,
    )}
  </>
);

const pins = sheets
  .flatMap((s) => (s.pins ?? []).map(([x, y]) => [s.at[0] + x / 3, s.at[1] + y / 3]))
  .sort((a, b) => a[1] - b[1]);

const signColor = { b: "#2566b8", r: "#d62243", g: "#6a9a48" };

/* Small deterministic scatter for villages and terrain patches. */
const scatter = (n: number, seed: number) => {
  let v = seed;
  const next = () => (v = (v * 16807) % 2147483647) / 2147483647;
  return Array.from({ length: n }, () => {
    const x = 600 + next() * 905, y = 108 + next() * 808, a = 2 + next() * 4, b = 1 + next() * 4;
    return `M${x.toFixed(1)} ${y.toFixed(1)}l${a.toFixed(1)} ${(-b).toFixed(1)} ${(a / 2).toFixed(1)} ${(b * 1.5).toFixed(1)} ${(-a).toFixed(1)} ${(b / 2).toFixed(1)}Z`;
  }).join("");
};
const villages = scatter(300, 71);
const hills = scatter(120, 933);

const MapArt = () => (
  <svg width="914" height="814" viewBox="594 105 914 814" style={{ display: "block" }}>
    <defs>
      <g id="pin">
        <path d="M0 24C-1.200 17.500-4.500 14-8.800 9.300A12.800 12.800 0 1 1 8.800 9.300C4.500 14 1.200 17.500 0 24Z" fill="#ea4343" stroke="#c0232f" strokeWidth=".8" />
        <circle r="5" fill="#b31f2e" />
      </g>
    </defs>
    <path fill="#f4f0e4" d="M594 105h914v814H594z" />
    <path d={hills} fill="#f0ebdf" />
    <path d={villages} fill="#f7f7f7" />
    <Layer name="city" fill="#f6f6f7" />
    <Layer name="park" fill="#d2f7e0" />
    <path d="M965 580l25 5 12 27-10 40-30-15-6-25Z" fill="#bcf0d2" />
    <path d="M955 640l15 5-5 10-10-4Z" fill="#f2e4d0" />
    <Layer name="sand" fill="#fff" />
    <path fill="#90daee" d="M594 105H913L910 125 903 143 895 170 890 187 885 210 875 237 868 260 855 278 848 307 838 340 827 370 813 400 800 430 790 453 780 453 782 458 776 459 784 463 778 467 782 473 778 480 767 507 747 545 730 577 713 603 690 637 668 670 650 700 594 772Z" />
    <path fill="#90daee" d={sea} transform="translate(1230 380) scale(.33333 .34758)" />
    <path fill="#90daee" d="M1446 286l3 2 1 20-4 5-5-1 2-12ZM683 668l4-4 4 2-2 5ZM1410 265l2-3v5ZM1417 264l4-3-4 6ZM970 430l4-2M912 565l4 1M1396 503l3-1 0 3ZM1403 498l4 1-3 2Z" />
    <path d="M637 105L778 460" stroke="#62c6e2" strokeWidth="1" strokeDasharray="4 2.500" fill="none" />
    <Layer name="minor" fill="none" stroke="#b3bfd2" strokeWidth=".9" />
    <Layer name="major" fill="none" stroke="#8798bd" strokeWidth="2.800" />
    <Layer name="major" fill="none" stroke="#a5b5d4" strokeWidth="1.600" />
    <Layer name="border" fill="none" stroke="#2a2c30" strokeWidth="1.300" strokeDasharray="6 3.500" />
    <path d="M1386 758L1385.500 805Q1384 832 1378 853Q1367 888 1345 919" fill="none" stroke="#222" strokeWidth="1.200" />
    <path d="M1386 759l71 28 6 10 24 7 21-2M1447 529h13l8 11-1 26 11 5 12-14 7-38 11-14M1485 108l14 20 7 22" fill="none" stroke="#666" strokeWidth=".8" strokeDasharray="2 2" />
    {places.map(([x, y, t, size, weight, width], i) => (
      <Label key={i} x={x} y={y - 0.4} fontSize={size ?? 12} fontWeight={weight ?? 400} textLength={width}>{t}</Label>
    ))}
    <SeaLabel transform="translate(1391 739) rotate(-78)">Dead Sea</SeaLabel>
    {roadSigns.map(([x, y, t, c], i) => (
      <g key={i} transform={`translate(${x} ${y})`}>
        {c === "g" ? (
          <rect x="-8" y="-5.500" width="16" height="11" fill={signColor.g} />
        ) : (
          <>
            <rect x="-11" y="-7" width="22" height="14" rx="1.500" fill={signColor[c]} />
            <rect x="-9.500" y="-5.700" width="19" height="11.400" rx="3" fill="#fff" />
          </>
        )}
        <SignText y="3.200" fill={c === "g" ? "#f5e27a" : signColor[c]}>{t}</SignText>
      </g>
    ))}
    <Layer name="zones" fill="#ff3f4a" fillOpacity=".4" stroke="#fb353d" strokeWidth="1.500" />
    <path d="M1150 552l30-28 20-12 12-12M1182 475l6 22-2 14 8 8M1199 552l13-20-6-8 8-6 2-14M1197 470l4 16 12 6 6 14M1210 548l12 8M1180 524l14 10 8-6" fill="none" stroke="#fb353d" strokeWidth="1.300" />
    {pins.map(([x, y], i) => <use key={i} href="#pin" x={x} y={y} />)}
  </svg>
);

export default function App() {
  return (
    <Page>
      <Global />
      <Header><Title>Alert - 16/09/2025</Title></Header>
      <Main>
        <InfoColumn>
          <Heading $size={21.6} $height={52} $top={15}>Alert info<SignalBox><Signal /></SignalBox></Heading>
          <Card>
            <CardTop>
              <Time><Clock />18:51:32</Time>
              <Kind>Red Alert<Signal /></Kind>
            </CardTop>
            {regions.map(([name, towns]) => (
              <Region key={name}>
                <RegionName>{name}</RegionName>
                <Pills>{towns.map((t) => <Pill key={t} $tracking={-(tighten[t] ?? 0) / t.length}>{t}</Pill>)}</Pills>
              </Region>
            ))}
          </Card>
        </InfoColumn>
        <MapColumn>
          <Heading $size={21.4} $height={53} $top={16}>Interactive Map</Heading>
          <MapFrame>
            <MapArt />
            <Brand><Logo />Tzofar</Brand>
            <Zoom><ZoomButton>+</ZoomButton><ZoomButton>−</ZoomButton></Zoom>
            <Credit>© <a>Google Maps</a></Credit>
          </MapFrame>
        </MapColumn>
      </Main>
    </Page>
  );
}
